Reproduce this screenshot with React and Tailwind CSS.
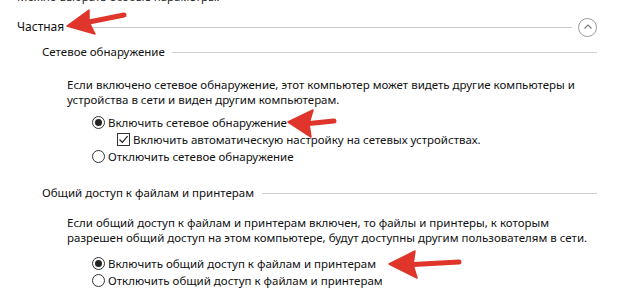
import React from "react";

function Radio({ checked }) {
  return (
    <span className="w-[13px] h-[13px] rounded-full border border-[#333] flex items-center justify-center shrink-0 bg-white">
      {checked && <span className="w-[7px] h-[7px] rounded-full bg-[#222]" />}
    </span>
  );
}

function Check() {
  return (
    <span className="w-[13px] h-[13px] border border-[#333] flex items-center justify-center shrink-0 bg-white">
      <svg width="11" height="11" viewBox="0 0 11 11">
        <path d="M1.5 5.5 L4.3 8.3 L9.6 2.2" fill="none" stroke="#222" strokeWidth="1.2" />
      </svg>
    </span>
  );
}

function Arrow({ tip, up, down, tail }) {
  const mx = (up[0] + down[0]) / 2 - 3;
  const my = (up[1] + down[1]) / 2;
  return (
    <g fill="#e0352b" stroke="#e0352b" strokeLinejoin="round">
      <line x1={mx} y1={my} x2={tail[0]} y2={tail[1]} strokeWidth="5" strokeLinecap="round" />
      <polygon points={`${tip[0]},${tip[1]} ${up[0]},${up[1]} ${mx},${my} ${down[0]},${down[1]}`} strokeWidth="1.5" />
    </g>
  );
}

export default function App() {
  return (
    <div
      className="relative w-[629px] h-[302px] overflow-hidden bg-white text-[#111] text-[11.5px] whitespace-nowrap"
      style={{ fontFamily: '"Noto Sans", "Open Sans", sans-serif' }}
    >
      {/* cut-off line at the top */}
      <div className="h-[6px] overflow-hidden pl-[17px]">
        <div className="leading-[16px] -mt-[11px] text-[#222]">Можно выбрать особые параметры.</div>
      </div>

      {/* Частная */}
      <div className="flex items-center h-[18px] mt-[12px] pl-[17px] pr-[32px]">
        <span className="text-[12px]">Частная</span>
        <span className="flex-1 h-px bg-[#c8c8c8] ml-[8px]" />
        <span className="w-[19px] h-[19px] rounded-full border border-[#9a9a9a] flex items-center justify-center ml-[6px]">
          <svg width="10" height="10" viewBox="0 0 10 10">
            <path d="M1.5 6.5 L5 3 L8.5 6.5" fill="none" stroke="#777" strokeWidth="1.1" />
          </svg>
        </span>
      </div>

      {/* Сетевое обнаружение */}
      <div className="flex items-center h-[18px] mt-[7px] pl-[42px] pr-[32px]">
        <span>Сетевое обнаружение</span>
        <span className="flex-1 h-px bg-[#d0d0d0] ml-[7px]" />
      </div>

      <div className="pl-[67px] mt-[16px] leading-[15px]">
        <p>Если включено сетевое обнаружение, этот компьютер может видеть другие компьютеры и</p>
        <p>устройства в сети и виден другим компьютерам.</p>
      </div>

      <div className="mt-[7px] pl-[92px]">
        <div className="flex items-center gap-[3px] h-[17px]">
          <Radio checked />
          <span>Включить сетевое обнаружение</span>
        </div>
        <div className="flex items-center gap-[3px] h-[17px] pl-[25px]">
          <Check />
          <span>Включить автоматическую настройку на сетевых устройствах.</span>
        </div>
        <div className="flex items-center gap-[3px] h-[17px]">
          <Radio />
          <span>Отключить сетевое обнаружение</span>
        </div>
      </div>

      {/* Общий доступ */}
      <div className="flex items-center h-[18px] mt-[19px] pl-[42px] pr-[32px]">
        <span>Общий доступ к файлам и принтерам</span>
        <span className="flex-1 h-px bg-[#d0d0d0] ml-[8px]" />
      </div>

      <div className="pl-[67px] mt-[13px] leading-[15px]">
        <p>Если общий доступ к файлам и принтерам включен, то файлы и принтеры, к которым</p>
        <p>разрешен общий доступ на этом компьютере, будут доступны другим пользователям в сети.</p>
      </div>

      <div className="mt-[10px] pl-[92px]">
        <div className="flex items-center gap-[3px] h-[17px]">
          <Radio checked />
          <span>Включить общий доступ к файлам и принтерам</span>
        </div>
        <div className="flex items-center gap-[3px] h-[17px]">
          <Radio />
          <span>Отключить общий доступ к файлам и принтерам</span>
        </div>
      </div>

      {/* red arrows */}
      <svg className="absolute inset-0 pointer-events-none" width="629" height="302">
        <Arrow tip={[67, 26]} up={[89, 10]} down={[95, 34]} tail={[124, 15]} />
        <Arrow tip={[288, 122]} up={[313, 110]} down={[311, 137]} tail={[334, 121]} />
        <Arrow tip={[389, 264]} up={[415, 251]} down={[417, 278]} tail={[459, 262]} />
      </svg>
    </div>
  );
}
